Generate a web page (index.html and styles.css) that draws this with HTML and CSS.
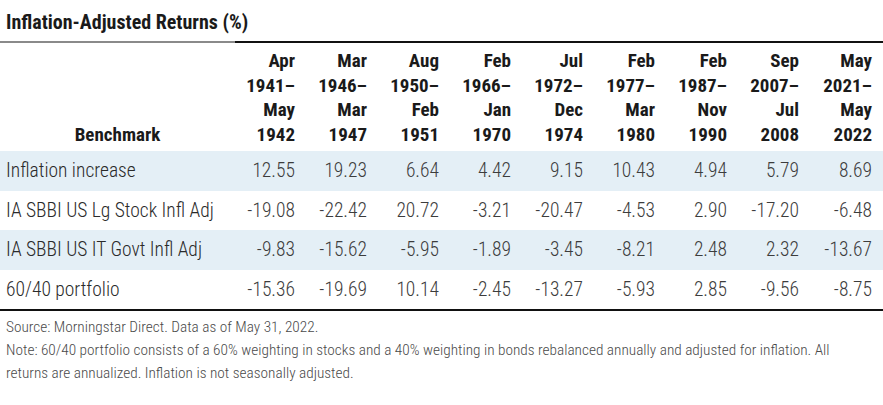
FILE: index.html
```html
<!DOCTYPE html>
<html>
<head>
<meta charset="utf-8">
<link rel="stylesheet" href="styles.css">
</head>
<body>
<div class="chart">
  <h1 class="title">Inflation-Adjusted Returns (%)</h1>
  <table class="returns">
    <colgroup>
      <col class="col-name">
      <col class="col-val"><col class="col-val"><col class="col-val">
      <col class="col-val"><col class="col-val"><col class="col-val">
      <col class="col-val"><col class="col-val"><col class="col-val">
    </colgroup>
    <thead>
      <tr>
        <th class="bench">Benchmark</th>
        <th>Apr<br>1941–<br>May<br>1942</th>
        <th>Mar<br>1946–<br>Mar<br>1947</th>
        <th>Aug<br>1950–<br>Feb<br>1951</th>
        <th>Feb<br>1966–<br>Jan<br>1970</th>
        <th>Jul<br>1972–<br>Dec<br>1974</th>
        <th>Feb<br>1977–<br>Mar<br>1980</th>
        <th>Feb<br>1987–<br>Nov<br>1990</th>
        <th>Sep<br>2007–<br>Jul<br>2008</th>
        <th>May<br>2021–<br>May<br>2022</th>
      </tr>
    </thead>
    <tbody>
      <tr class="shaded">
        <td class="name">Inflation increase</td>
        <td>12.55</td><td>19.23</td><td>6.64</td><td>4.42</td><td>9.15</td><td>10.43</td><td>4.94</td><td>5.79</td><td>8.69</td>
      </tr>
      <tr>
        <td class="name">IA SBBI US Lg Stock Infl Adj</td>
        <td>-19.08</td><td>-22.42</td><td>20.72</td><td>-3.21</td><td>-20.47</td><td>-4.53</td><td>2.90</td><td>-17.20</td><td>-6.48</td>
      </tr>
      <tr class="shaded">
        <td class="name">IA SBBI US IT Govt Infl Adj</td>
        <td>-9.83</td><td>-15.62</td><td>-5.95</td><td>-1.89</td><td>-3.45</td><td>-8.21</td><td>2.48</td><td>2.32</td><td>-13.67</td>
      </tr>
      <tr>
        <td class="name">60/40 portfolio</td>
        <td>-15.36</td><td>-19.69</td><td>10.14</td><td>-2.45</td><td>-13.27</td><td>-5.93</td><td>2.85</td><td>-9.56</td><td>-8.75</td>
      </tr>
    </tbody>
  </table>
  <div class="notes">
    <p>Source: Morningstar Direct. Data as of May 31, 2022.</p>
    <p>Note: 60/40 portfolio consists of a 60% weighting in stocks and a 40% weighting in bonds rebalanced annually and adjusted for inflation. All returns are annualized. Inflation is not seasonally adjusted.</p>
  </div>
</div>
</body>
</html>
```

FILE: styles.css
```css
html, body {
  margin: 0;
  padding: 0;
  background: #ffffff;
}

body {
  font-family: "Roboto Condensed", "Open Sans", sans-serif;
  color: #333333;
  width: 883px;
}

.title {
  margin: 0;
  padding: 11px 0 0 6px;
  height: 30px;
  font-size: 20px;
  font-weight: bold;
  color: #1a1a1a;
  line-height: 22px;
}

.returns {
  width: 883px;
  border-collapse: collapse;
  table-layout: fixed;
}

.col-name {
  width: 235px;
}

.col-val {
  width: 72px;
}

.returns th {
  padding: 6px 12px 4px 0;
  text-align: right;
  vertical-align: bottom;
  font-size: 19px;
  font-weight: bold;
  line-height: 24.5px;
  color: #1a1a1a;
  border-top: 2px solid #111111;
}

.returns th:last-child {
  padding-right: 11px;
}

.returns th.bench {
  text-align: center;
  padding-right: 0;
  border-top-color: #8a8a8a;
}

.returns td {
  height: 39.5px;
  padding: 0 12px 0 0;
  text-align: right;
  font-size: 19.5px;
  font-weight: 300;
  color: #3c3c3c;
  vertical-align: middle;
}

.returns td:last-child {
  padding-right: 11px;
}

.returns td.name {
  text-align: left;
  padding-left: 6px;
  color: #2a2a2a;
}

.returns tr.shaded td {
  background: #e4eff6;
}

.returns tbody tr:last-child td {
  border-bottom: 2px solid #111111;
}

.notes {
  padding: 5px 30px 0 6px;
  font-size: 15.3px;
  font-weight: 300;
  line-height: 23px;
  color: #4a4a4a;
}

.notes p {
  margin: 0;
}
```
